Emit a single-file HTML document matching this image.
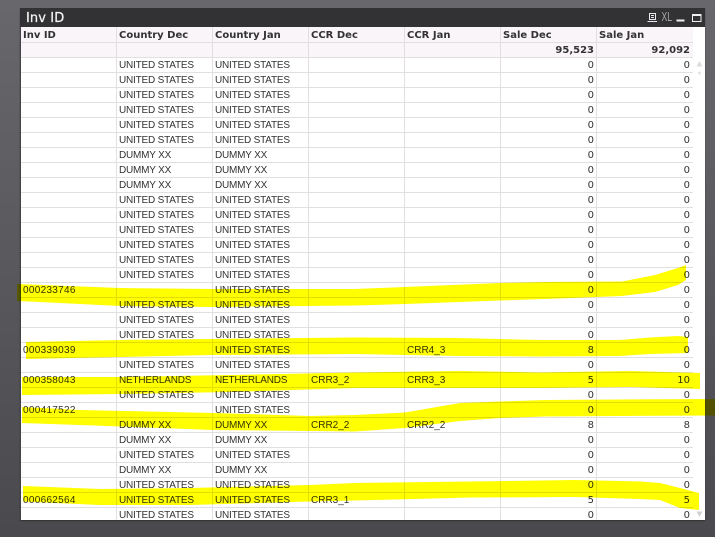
<!DOCTYPE html>
<html><head><meta charset="utf-8"><style>
html,body{margin:0;padding:0}
body{width:715px;height:537px;overflow:hidden;position:relative;background:linear-gradient(#68686c,#4a4a4e)}
#win{position:absolute;left:20px;top:8px;width:685px;height:512px;background:#fff;overflow:hidden;box-shadow:0 1px 1px #333;border-left:0}
#edge{position:absolute;left:0;top:0;width:1px;height:512px;background:#444448}
#bar{position:absolute;left:0;top:0;width:685px;height:19px;background:#323234;color:#f4f4f4;font:13px/21px "DejaVu Sans",sans-serif;text-indent:6px;-webkit-text-stroke:.25px #f4f4f4;letter-spacing:.1px}
table{position:absolute;left:1px;top:19px;border-collapse:separate;border-spacing:0;table-layout:fixed;width:672px;font:10px/12px "Liberation Sans",sans-serif;color:#333}
td,th{height:12px;padding:2px 2px 0;border-right:1px solid #e2dfe2;border-bottom:1px solid #e2dfe2;white-space:nowrap;overflow:hidden;text-align:left;box-sizing:content-box}
th{height:13px;font:bold 10px/13px "DejaVu Sans",sans-serif;background:#f9f5f9;color:#333}
tr.t td{background:#f9f5f9;font:bold 10px/12px "DejaVu Sans",sans-serif}
td:nth-child(1){letter-spacing:.3px}
td:nth-child(2),td:nth-child(3){letter-spacing:-.2px}
td:last-child,th:last-child{border-right:0;padding-right:3px}
td.n{text-align:right;font-family:"DejaVu Sans",sans-serif;letter-spacing:0}
svg{position:absolute;left:0;top:0}
</style></head><body>
<div id="win">
<table><colgroup><col style="width:96px"><col style="width:96px"><col style="width:96px"><col style="width:96px"><col style="width:96px"><col style="width:96px"><col style="width:96px"></colgroup>
<tr><th>Inv ID</th><th>Country Dec</th><th>Country Jan</th><th>CCR Dec</th><th>CCR Jan</th><th>Sale Dec</th><th>Sale Jan</th></tr>
<tr class="t"><td></td><td></td><td></td><td></td><td></td><td class="n">95,523</td><td class="n">92,092</td></tr>
<tr><td></td><td>UNITED STATES</td><td>UNITED STATES</td><td></td><td></td><td class="n">0</td><td class="n">0</td></tr>
<tr><td></td><td>UNITED STATES</td><td>UNITED STATES</td><td></td><td></td><td class="n">0</td><td class="n">0</td></tr>
<tr><td></td><td>UNITED STATES</td><td>UNITED STATES</td><td></td><td></td><td class="n">0</td><td class="n">0</td></tr>
<tr><td></td><td>UNITED STATES</td><td>UNITED STATES</td><td></td><td></td><td class="n">0</td><td class="n">0</td></tr>
<tr><td></td><td>UNITED STATES</td><td>UNITED STATES</td><td></td><td></td><td class="n">0</td><td class="n">0</td></tr>
<tr><td></td><td>UNITED STATES</td><td>UNITED STATES</td><td></td><td></td><td class="n">0</td><td class="n">0</td></tr>
<tr><td></td><td>DUMMY XX</td><td>DUMMY XX</td><td></td><td></td><td class="n">0</td><td class="n">0</td></tr>
<tr><td></td><td>DUMMY XX</td><td>DUMMY XX</td><td></td><td></td><td class="n">0</td><td class="n">0</td></tr>
<tr><td></td><td>DUMMY XX</td><td>DUMMY XX</td><td></td><td></td><td class="n">0</td><td class="n">0</td></tr>
<tr><td></td><td>UNITED STATES</td><td>UNITED STATES</td><td></td><td></td><td class="n">0</td><td class="n">0</td></tr>
<tr><td></td><td>UNITED STATES</td><td>UNITED STATES</td><td></td><td></td><td class="n">0</td><td class="n">0</td></tr>
<tr><td></td><td>UNITED STATES</td><td>UNITED STATES</td><td></td><td></td><td class="n">0</td><td class="n">0</td></tr>
<tr><td></td><td>UNITED STATES</td><td>UNITED STATES</td><td></td><td></td><td class="n">0</td><td class="n">0</td></tr>
<tr><td></td><td>UNITED STATES</td><td>UNITED STATES</td><td></td><td></td><td class="n">0</td><td class="n">0</td></tr>
<tr><td></td><td>UNITED STATES</td><td>UNITED STATES</td><td></td><td></td><td class="n">0</td><td class="n">0</td></tr>
<tr><td>000233746</td><td></td><td>UNITED STATES</td><td></td><td></td><td class="n">0</td><td class="n">0</td></tr>
<tr><td></td><td>UNITED STATES</td><td>UNITED STATES</td><td></td><td></td><td class="n">0</td><td class="n">0</td></tr>
<tr><td></td><td>UNITED STATES</td><td>UNITED STATES</td><td></td><td></td><td class="n">0</td><td class="n">0</td></tr>
<tr><td></td><td>UNITED STATES</td><td>UNITED STATES</td><td></td><td></td><td class="n">0</td><td class="n">0</td></tr>
<tr><td>000339039</td><td></td><td>UNITED STATES</td><td></td><td>CRR4_3</td><td class="n">8</td><td class="n">0</td></tr>
<tr><td></td><td>UNITED STATES</td><td>UNITED STATES</td><td></td><td></td><td class="n">0</td><td class="n">0</td></tr>
<tr><td>000358043</td><td>NETHERLANDS</td><td>NETHERLANDS</td><td>CRR3_2</td><td>CRR3_3</td><td class="n">5</td><td class="n">10</td></tr>
<tr><td></td><td>UNITED STATES</td><td>UNITED STATES</td><td></td><td></td><td class="n">0</td><td class="n">0</td></tr>
<tr><td>000417522</td><td></td><td>UNITED STATES</td><td></td><td></td><td class="n">0</td><td class="n">0</td></tr>
<tr><td></td><td>DUMMY XX</td><td>DUMMY XX</td><td>CRR2_2</td><td>CRR2_2</td><td class="n">8</td><td class="n">8</td></tr>
<tr><td></td><td>DUMMY XX</td><td>DUMMY XX</td><td></td><td></td><td class="n">0</td><td class="n">0</td></tr>
<tr><td></td><td>UNITED STATES</td><td>UNITED STATES</td><td></td><td></td><td class="n">0</td><td class="n">0</td></tr>
<tr><td></td><td>DUMMY XX</td><td>DUMMY XX</td><td></td><td></td><td class="n">0</td><td class="n">0</td></tr>
<tr><td></td><td>UNITED STATES</td><td>UNITED STATES</td><td></td><td></td><td class="n">0</td><td class="n">0</td></tr>
<tr><td>000662564</td><td>UNITED STATES</td><td>UNITED STATES</td><td>CRR3_1</td><td></td><td class="n">5</td><td class="n">5</td></tr>
<tr><td></td><td>UNITED STATES</td><td>UNITED STATES</td><td></td><td></td><td class="n">0</td><td class="n">0</td></tr>
</table>
<div id="edge"></div>
<div id="bar">Inv ID</div>
</div>
<svg width="715" height="537" viewBox="0 0 715 537">
<g fill="none" stroke="#e8e8ec" stroke-width="1">
<rect x="649.500" y="13.500" width="6" height="6"/><path d="M651 15.500h3M651 17.500h3M647.500 21.500h9.500"/>
</g>
<text x="661.500" y="21" font-family="Liberation Sans,sans-serif" font-size="13" fill="#a8a8ac" textLength="10.500" lengthAdjust="spacingAndGlyphs">XL</text>
<rect x="676.500" y="19.500" width="8" height="2" fill="#f0f0f0"/>
<rect x="692.500" y="14.500" width="8.500" height="7" fill="none" stroke="#f0f0f0"/><rect x="692" y="14" width="9.500" height="2" fill="#f0f0f0"/>
<path d="M699.500 61l-3 5.500h6z" fill="#dcdcdc"/><circle cx="699.500" cy="73" r="1.500" fill="#e4e4e4"/><path d="M699.500 517l-3-5.500h6z" fill="#d0d0d0"/>
<g fill="#ffff00" style="mix-blend-mode:multiply">
<path d="M17 284L120 288 212 289 333 289 355 289 405 287 500 283 545 282 622 281.500 655 275 678 268 686 265 686 280 678 285 655 292 622 296 545 299 500 300.500 405 304 355 305.500 212 307 120 306 40 302 17 301z"/>
<path d="M26 342L120 340 212 339 355 337.500 458 338 540 340 620 340 650 337.500 678 336 688 337 688 353 650 354 620 356 540 356.500 458 356 355 354 212 355 120 357 26 359z"/>
<path d="M22 377L120 377 230 375 355 372.500 460 371 540 372.500 630 371 700 373 700 389 630 387 540 388 460 388 355 388 230 392 120 394 22 395z"/>
<path d="M22 407L80 410 213 413 310 416 355 415 405 412.500 460 403 500 401.500 545 400 620 399.500 715 399 715 415.500 620 416 545 416.500 500 418 460 421 405 428 355 431.500 310 431 213 430 80 425 22 423z"/>
<path d="M23 486L100 489 190 488 310 485 355 483 470 481.500 575 480 640 481.500 660 483 680 488 699 493 699 510 680 508 660 500 640 499 575 497 470 497.500 355 500.500 310 501.500 190 505 100 505 23 501.500z"/>
</g>
</svg>
</body></html>
